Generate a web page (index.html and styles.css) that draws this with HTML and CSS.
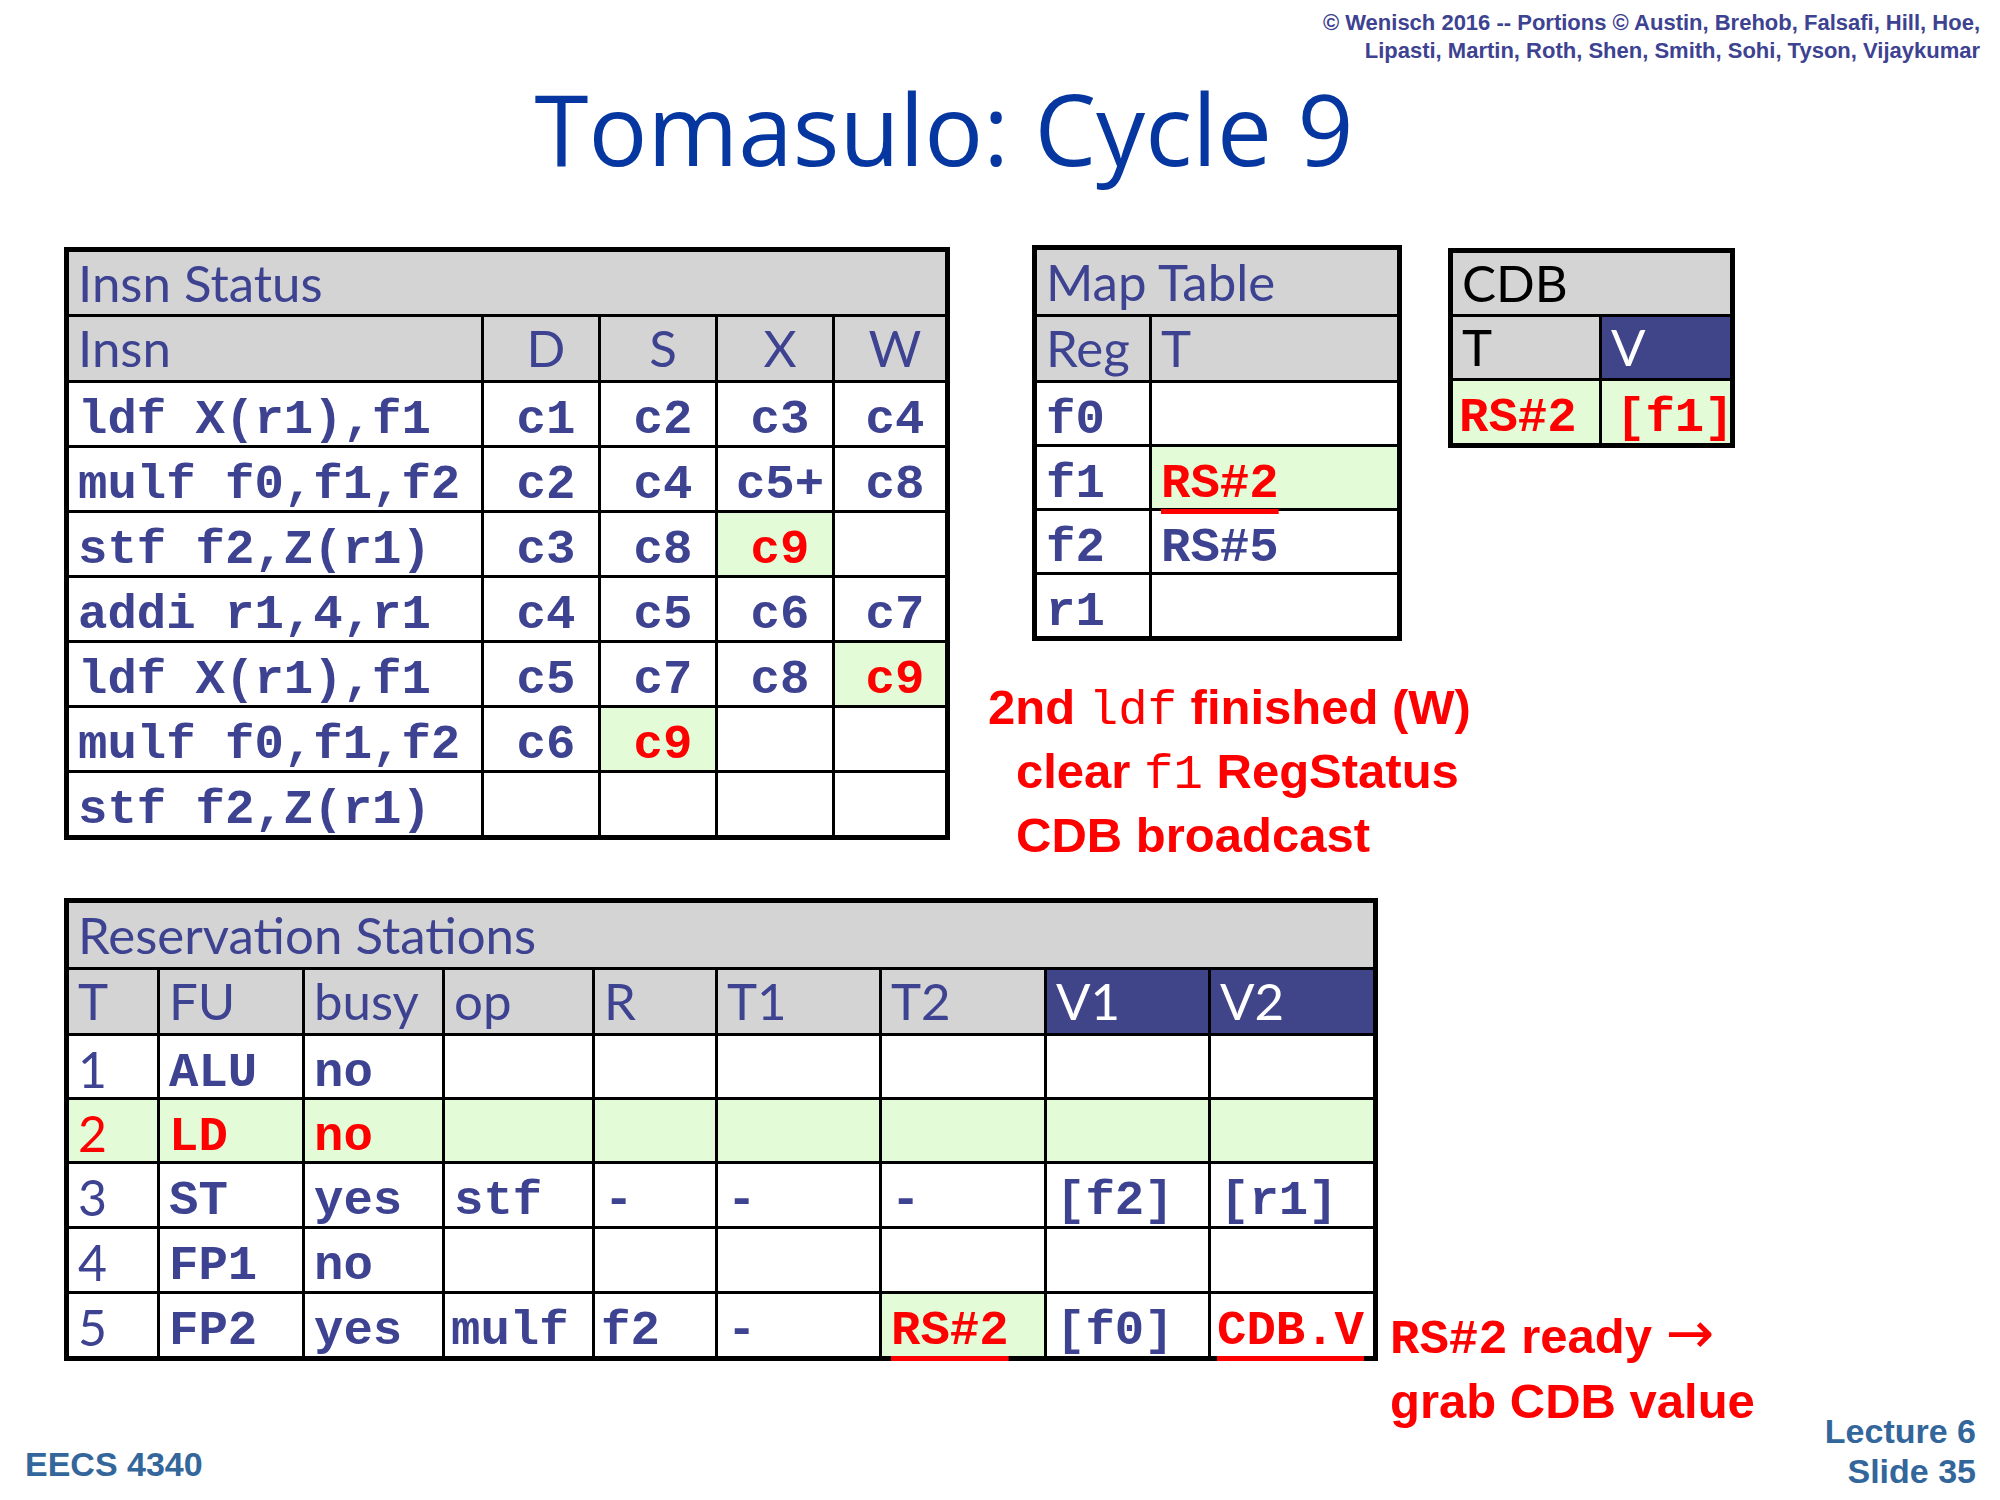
FILE: index.html
```html
<!DOCTYPE html>
<html lang="en">
<head>
<meta charset="utf-8">
<title>Tomasulo: Cycle 9</title>
<link rel="stylesheet" href="styles.css">
</head>
<body>
<div class="slide">
  <header class="top">
    <div class="copy">
      <div>© Wenisch 2016 -- Portions © Austin, Brehob, Falsafi, Hill, Hoe,</div>
      <div>Lipasti, Martin, Roth, Shen, Smith, Sohi, Tyson, Vijaykumar</div>
    </div>
    <h1 class="title">Tomasulo: Cycle 9</h1>
  </header>

  <section class="row1">
    <div class="grid insn">
      <div class="c hd span">Insn Status</div>
      <div class="c hd">Insn</div><div class="c hd ctr">D</div><div class="c hd ctr">S</div><div class="c hd ctr">X</div><div class="c hd ctr">W</div>

      <div class="c m">ldf X(r1),f1</div><div class="c m ctr">c1</div><div class="c m ctr">c2</div><div class="c m ctr">c3</div><div class="c m ctr">c4</div>
      <div class="c m">mulf f0,f1,f2</div><div class="c m ctr">c2</div><div class="c m ctr">c4</div><div class="c m ctr">c5+</div><div class="c m ctr">c8</div>
      <div class="c m">stf f2,Z(r1)</div><div class="c m ctr">c3</div><div class="c m ctr">c8</div><div class="c m ctr hi red">c9</div><div class="c m ctr"></div>
      <div class="c m">addi r1,4,r1</div><div class="c m ctr">c4</div><div class="c m ctr">c5</div><div class="c m ctr">c6</div><div class="c m ctr">c7</div>
      <div class="c m">ldf X(r1),f1</div><div class="c m ctr">c5</div><div class="c m ctr">c7</div><div class="c m ctr">c8</div><div class="c m ctr hi red">c9</div>
      <div class="c m">mulf f0,f1,f2</div><div class="c m ctr">c6</div><div class="c m ctr hi red">c9</div><div class="c m ctr"></div><div class="c m ctr"></div>
      <div class="c m">stf f2,Z(r1)</div><div class="c m ctr"></div><div class="c m ctr"></div><div class="c m ctr"></div><div class="c m ctr"></div>
    </div>

    <div class="side">
      <div class="side-tables">
        <div class="grid map">
          <div class="c hd span">Map Table</div>
          <div class="c hd">Reg</div><div class="c hd">T</div>
          <div class="c m">f0</div><div class="c m"></div>
          <div class="c m">f1</div><div class="c m hi red"><span class="ul">RS#2</span></div>
          <div class="c m">f2</div><div class="c m">RS#5</div>
          <div class="c m">r1</div><div class="c m"></div>
        </div>
        <div class="grid cdb">
          <div class="c hd blk span">CDB</div>
          <div class="c hd blk">T</div><div class="c hd dark">V</div>
          <div class="c m hi red tight">RS#2</div><div class="c m hi red loose">[f1]</div>
        </div>
      </div>
      <div class="note note1">
        <div>2nd <span class="mono-r">ldf</span> finished (W)</div>
        <div class="ind">clear <span class="mono-r">f1</span> RegStatus</div>
        <div class="ind">CDB broadcast</div>
      </div>
    </div>
  </section>

  <section class="row2">
    <div class="grid rs">
      <div class="c hd span">Reservation Stations</div>
      <div class="c hd">T</div><div class="c hd">FU</div><div class="c hd">busy</div><div class="c hd">op</div><div class="c hd">R</div><div class="c hd">T1</div><div class="c hd">T2</div><div class="c hd dark">V1</div><div class="c hd dark">V2</div>

      <div class="c sans">1</div><div class="c m">ALU</div><div class="c m">no</div><div class="c m"></div><div class="c m"></div><div class="c m"></div><div class="c m"></div><div class="c m"></div><div class="c m"></div>
      <div class="c sans hi red">2</div><div class="c m hi red">LD</div><div class="c m hi red">no</div><div class="c m hi"></div><div class="c m hi"></div><div class="c m hi"></div><div class="c m hi"></div><div class="c m hi"></div><div class="c m hi"></div>
      <div class="c sans">3</div><div class="c m">ST</div><div class="c m">yes</div><div class="c m">stf</div><div class="c m">-</div><div class="c m">-</div><div class="c m">-</div><div class="c m">[f2]</div><div class="c m">[r1]</div>
      <div class="c sans">4</div><div class="c m">FP1</div><div class="c m">no</div><div class="c m"></div><div class="c m"></div><div class="c m"></div><div class="c m"></div><div class="c m"></div><div class="c m"></div>
      <div class="c sans">5</div><div class="c m">FP2</div><div class="c m">yes</div><div class="c m tight">mulf</div><div class="c m tight">f2</div><div class="c m">-</div><div class="c m hi red"><span class="ul">RS#2</span></div><div class="c m">[f0]</div><div class="c m red tight"><span class="ul">CDB.V</span></div>
    </div>
    <div class="note note2">
      <div><span class="mono-b">RS#2</span> ready <span class="arrow">→</span></div>
      <div>grab CDB value</div>
    </div>
  </section>

  <footer class="foot">
    <div class="course">EECS 4340</div>
    <div class="lect">
      <div>Lecture 6</div>
      <div>Slide 35</div>
    </div>
  </footer>
</div>
</body>
</html>
```

FILE: styles.css
```css
html, body {
  margin: 0;
  padding: 0;
  background: #ffffff;
}

.slide {
  width: 2000px;
  height: 1500px;
  overflow: hidden;
  background: #ffffff;
}

/* ---------- header ---------- */
.top {
  height: 247px;
}

.copy {
  padding-top: 9px;
  padding-right: 20px;
  text-align: right;
  font-family: "Liberation Sans", Arial, sans-serif;
  font-weight: 700;
  font-size: 22px;
  line-height: 28px;
  color: #3d4291;
}

.title {
  margin: 13px 112px 0 0;
  text-align: center;
  font-family: "Open Sans", "DejaVu Sans", sans-serif;
  font-weight: 400;
  font-size: 98px;
  line-height: 100px;
  color: #0636a0;
}

/* ---------- generic grid table ---------- */
.grid {
  display: grid;
  background: #000000;
  padding: 5px;
  gap: 3px;
  flex: none;
}

.c {
  background: #ffffff;
  display: flex;
  align-items: center;
  padding-left: 9px;
  color: #3d4291;
  white-space: pre;
}

.span {
  grid-column: 1 / -1;
}

.hd {
  background: #d4d4d4;
  font-family: Lato, "Open Sans", sans-serif;
  font-size: 51px;
  padding-bottom: 2px;
}

.hd.blk {
  color: #000000;
}

.hd.dark {
  background: #404488;
  color: #ffffff;
}

.m {
  font-family: "Liberation Mono", "Courier New", monospace;
  font-weight: 700;
  font-size: 49px;
  padding-top: 12px;
}

.sans {
  font-family: Lato, "Open Sans", sans-serif;
  font-size: 50px;
  padding-top: 4px;
}

.ctr {
  justify-content: center;
  padding-left: 10px;
}

.hi {
  background: #e3fcd7;
}

.red {
  color: #ff0000;
}

.tight {
  padding-left: 6px;
}

.loose {
  padding-left: 14px;
}

.ul {
  position: relative;
  z-index: 1;
  text-decoration: underline;
  text-decoration-thickness: 5px;
  text-underline-offset: 12px;
  text-decoration-skip-ink: none;
}

/* ---------- Insn Status ---------- */
.insn {
  width: 886px;
  box-sizing: border-box;
  grid-template-columns: 412px 114px 114px 114px 110px;
  grid-template-rows: 62px 63px repeat(7, 62px);
}

/* ---------- row 1 ---------- */
.row1 {
  height: 651px;
  display: flex;
  align-items: flex-start;
  padding-left: 64px;
}

.side {
  margin-left: 38px;
  display: flex;
  flex-direction: column;
}

.side-tables {
  display: flex;
  align-items: flex-start;
  padding-left: 44px;
  gap: 46px;
}

.map {
  grid-template-columns: 112px 245px;
  grid-template-rows: 64px 63px repeat(4, 61px);
  margin-top: -2px;
}

.cdb {
  grid-template-columns: 146px 128px;
  grid-template-rows: 61px 61px 62px;
  margin-top: 1px;
}

.note {
  font-family: "Liberation Sans", Arial, sans-serif;
  font-weight: 700;
  font-size: 49px;
  line-height: 60px;
  color: #ff0000;
  white-space: nowrap;
}

.note1 {
  margin-top: 36px;
}

.ind {
  padding-left: 28px;
}

.mono-r {
  font-family: "Liberation Mono", "Courier New", monospace;
  font-weight: 400;
}

.mono-b {
  font-family: "Liberation Mono", "Courier New", monospace;
  font-weight: 700;
}

.arrow {
  font-family: "DejaVu Sans", sans-serif;
  font-weight: 400;
  font-size: 58px;
  line-height: 0;
}

/* ---------- row 2 ---------- */
.row2 {
  height: 463px;
  display: flex;
  align-items: flex-start;
  padding-left: 64px;
}

.rs {
  grid-template-columns: 88px 142px 137px 147px 120px 161px 162px 161px 162px;
  grid-template-rows: 64px 63px 61px 61px 62px 62px 62px;
}

.note2 {
  margin-left: 12px;
  margin-top: 408px;
  line-height: 61px;
}

/* ---------- footer ---------- */
.foot {
  height: 139px;
  display: flex;
  justify-content: space-between;
  align-items: flex-end;
  padding: 0 24px 9px 25px;
  box-sizing: border-box;
  font-family: "Liberation Sans", Arial, sans-serif;
  font-weight: 700;
  font-size: 34px;
  line-height: 40px;
  color: #33669a;
}

.course {
  margin-bottom: 7px;
}

.lect {
  text-align: right;
}
```
